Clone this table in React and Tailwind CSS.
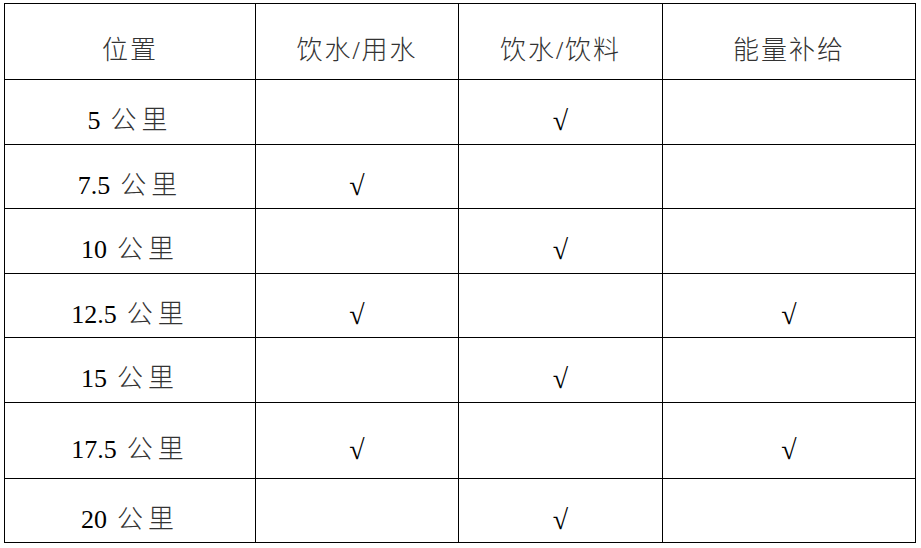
const rows = [
  { label: "5", h: "h-[65px]", marks: [false, true, false] },
  { label: "7.5", h: "h-[64px]", marks: [true, false, false] },
  { label: "10", h: "h-[65px]", marks: [false, true, false] },
  { label: "12.5", h: "h-[64px]", marks: [true, false, true] },
  { label: "15", h: "h-[65px]", marks: [false, true, false] },
  { label: "17.5", h: "h-[76px]", marks: [true, false, true] },
  { label: "20", h: "h-[64px]", marks: [false, true, false] },
]

const headers = ["位置", "饮水/用水", "饮水/饮料", "能量补给"]

const font = "font-['Liberation_Serif','Noto_Sans_CJK_SC',serif]"

const Cell = ({ children, h }) => (
  <div className={`${h} border-r border-b border-black flex items-center justify-center pt-[18px]`}>
    {children}
  </div>
)

const App = () => {
  return (
    <div className={`min-h-screen bg-white pl-[4px] pt-[3px] text-black ${font}`}>
      <div className="grid w-fit grid-cols-[251px_203px_204px_253px] border-l border-t border-black">
        {headers.map((t) => (
          <Cell key={t} h="h-[76px]">
            <span className="text-[26px] font-light tracking-[2px] leading-none text-[#333]">{t}</span>
          </Cell>
        ))}
        {rows.map((r) => (
          <div key={r.label} className="contents">
            <Cell h={r.h}>
              <span className="text-[26px] leading-none">
                {r.label}
                <span className="font-light tracking-[5px] ml-[10px] text-[#333]">公里</span>
              </span>
            </Cell>
            {r.marks.map((m, j) => (
              <Cell key={j} h={r.h}>
                {m && <span className="text-[28px] leading-none">√</span>}
              </Cell>
            ))}
          </div>
        ))}
      </div>
    </div>
  )
}

export default App
